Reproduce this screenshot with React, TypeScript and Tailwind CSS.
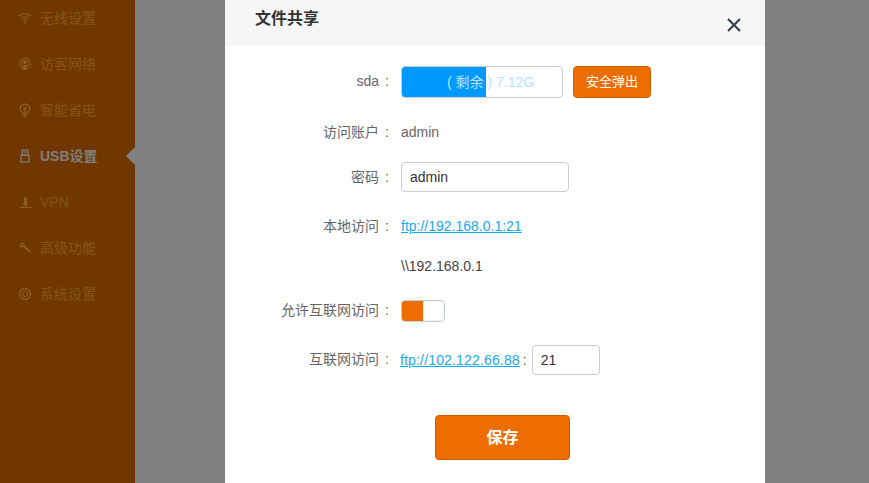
import { ReactNode } from "react";

const font = "font-['Liberation_Sans','Noto_Sans_CJK_SC',sans-serif]";

const WifiIcon = () => (
  <svg width="14" height="12" viewBox="0 0 14 12" fill="none" stroke="currentColor" strokeWidth="1.2">
    <path d="M1 4 C4.5 1 9.5 1 13 4" />
    <path d="M3 6.4 C5.5 4.4 8.5 4.4 11 6.4" />
    <path d="M5 8.6 C6.2 7.7 7.8 7.7 9 8.6" />
    <circle cx="7" cy="10.6" r="0.9" fill="currentColor" stroke="none" />
  </svg>
);

const GuestIcon = () => (
  <svg width="14" height="14" viewBox="0 0 14 14" fill="none" stroke="currentColor" strokeWidth="1">
    <circle cx="7" cy="6.5" r="5.5" />
    <circle cx="7" cy="6.5" r="3.4" />
    <circle cx="7" cy="5.6" r="1.5" fill="currentColor" stroke="none" />
    <path d="M5 13 L5.6 8 H8.4 L9 13 Z" fill="currentColor" stroke="none" />
  </svg>
);

const BulbIcon = () => (
  <svg width="12" height="15" viewBox="0 0 12 15" fill="none" stroke="currentColor" strokeWidth="1.2">
    <path d="M3.6 10 C1 8.2 1 5.8 1.5 4.2 C3 0.2 9 0.2 10.5 4.2 C11 5.8 11 8.2 8.4 10 Z" />
    <path d="M6 3.5 V9.5 M4 5.5 H8" />
    <path d="M4 11.5 H8 M4.6 13.5 H7.4" strokeWidth="1.4" />
  </svg>
);

const UsbIcon = () => (
  <svg width="10" height="14" viewBox="0 0 10 14" fill="none" stroke="currentColor" strokeWidth="1.2">
    <rect x="2.2" y="1" width="5.6" height="5" />
    <rect x="1" y="6" width="8" height="7" />
    <path d="M3.5 3 H6.5" />
  </svg>
);

const VpnIcon = () => (
  <svg width="13" height="13" viewBox="0 0 13 13" fill="currentColor">
    <circle cx="6.5" cy="3" r="2" />
    <path d="M5.2 4.5 H7.8 L8.8 9.5 H4.2 Z" />
    <rect x="0.5" y="10.8" width="12" height="1.1" />
  </svg>
);

const ToolIcon = () => (
  <svg width="13" height="12" viewBox="0 0 13 12" fill="none" stroke="currentColor" strokeWidth="1.2">
    <path d="M0.8 3.6 L3.4 0.9 L5.2 2.6 L2.6 5.2 Z" />
    <path d="M4.4 3.8 L11.8 10.6" strokeWidth="1.7" />
  </svg>
);

const GearIcon = () => (
  <svg width="14" height="14" viewBox="0 0 14 14" fill="none" stroke="currentColor">
    <circle cx="7" cy="7" r="5.4" strokeWidth="1.5" strokeDasharray="2.2 0.6" />
    <circle cx="7" cy="7" r="2.6" strokeWidth="1" />
  </svg>
);

const menu = [
  { label: "无线设置", icon: <WifiIcon /> },
  { label: "访客网络", icon: <GuestIcon /> },
  { label: "智能省电", icon: <BulbIcon /> },
  { label: "USB设置", icon: <UsbIcon />, active: true },
  { label: "VPN", icon: <VpnIcon /> },
  { label: "高级功能", icon: <ToolIcon /> },
  { label: "系统设置", icon: <GearIcon /> },
];

const Sidebar = () => (
  <aside className="w-[135px] h-full shrink-0 bg-[#703700]">
    <nav className="-mt-[5px]">
      {menu.map((item) => (
        <div
          key={item.label}
          className={`relative h-[46px] flex items-center text-sm ${item.active ? "font-bold text-[#7f7f7f]" : "text-[#85561c]"}`}
        >
          <span className={`w-[14px] ml-[18px] mr-[8px] flex justify-center ${item.active ? "text-[#7f7f7f]" : "text-[#8f5f28]"}`}>
            {item.icon}
          </span>
          {item.label}
          {item.active && (
            <span className="absolute right-0 top-[14px] border-y-[9px] border-r-[9px] border-y-transparent border-r-[#808080]" />
          )}
        </div>
      ))}
    </nav>
  </aside>
);

const Row = ({ label, height, lift = "", children }: { label?: string; height: string; lift?: string; children: ReactNode }) => (
  <div className={`flex items-center ${height}`}>
    <div className={`w-[154px] text-right text-sm text-[#666] ${lift}`}>{label}</div>
    <div className={`w-[13px] pl-[6px] text-sm text-[#666] ${lift}`}>{label ? ":" : ""}</div>
    <div className="flex items-center ml-[9px]">{children}</div>
  </div>
);

const App = () => (
  <div className={`w-[869px] h-[483px] overflow-hidden flex bg-[#808080] ${font}`}>
    <Sidebar />
    <main className="w-[540px] h-full ml-[90px] bg-white">
      <header className="h-[46px] bg-[#f6f6f6] flex justify-between pl-[30px] pr-[23px]">
        <h1 className="text-base font-bold text-[#333] pt-[7px] leading-6">文件共享</h1>
        <svg className="mt-[17px]" width="16" height="16" viewBox="0 0 16 16" stroke="#3a4450" strokeWidth="2.2">
          <path d="M2 2 L14 14 M14 2 L2 14" />
        </svg>
      </header>

      <div className="pt-[20px]">
        <Row label="sda" height="h-[32px]" lift="pb-[3px]">
          <div className="relative w-[162px] h-[32px] rounded border border-[#ccc] overflow-hidden text-sm leading-[30px] text-[#b3e3ff]">
            <div className="absolute inset-y-0 left-0 w-[84px] bg-[#0099ff]" />
            <span className="absolute left-[45px] top-0 whitespace-pre">( 剩余 ) 7.12G</span>
          </div>
          <button className="ml-[10px] w-[78px] h-[32px] rounded bg-[#ed6d00] border border-[#cf6000] text-white text-[13px]">
            安全弹出
          </button>
        </Row>
        <div className="h-[19px]" />
        <Row label="访问账户" height="h-[30px]">
          <span className="text-sm text-[#666]">admin</span>
        </Row>
        <div className="h-[15px]" />
        <Row label="密码" height="h-[30px]">
          <input
            readOnly
            value="admin"
            className="w-[168px] h-[30px] rounded border border-[#ccc] px-[8px] text-sm text-[#333] outline-none"
          />
        </Row>
        <div className="h-[19px]" />
        <Row label="本地访问" height="h-[30px]">
          <a className="text-sm text-[#1aa7f0] underline">ftp://192.168.0.1:21</a>
        </Row>
        <div className="h-[10px]" />
        <Row height="h-[30px]">
          <span className="text-sm text-[#444]">\\192.168.0.1</span>
        </Row>
        <div className="h-[15px]" />
        <Row label="允许互联网访问" height="h-[30px]" lift="pb-[2px]">
          <div className="w-[44px] h-[22px] rounded border border-[#c5ccd3] flex overflow-hidden">
            <div className="w-[21px] bg-[#ed6d00]" />
            <div className="flex-1 bg-white shadow-[inset_0_0_2px_#c5ccd3]" />
          </div>
        </Row>
        <div className="h-[19px]" />
        <Row label="互联网访问" height="h-[30px]" lift="pb-[2px]">
          <a className="-ml-[1px] text-sm tracking-[0.16px] text-[#1aa7f0] underline">ftp://102.122.66.88</a>
          <span className="ml-[3px] w-[9px] text-sm text-[#666]">:</span>
          <input
            readOnly
            value="21"
            className="w-[68px] h-[30px] rounded border border-[#ccc] px-[8px] text-sm text-[#333] outline-none"
          />
        </Row>
        <div className="flex justify-center pt-[40px] pl-[15px]">
          <button className="w-[135px] h-[45px] rounded bg-[#ed6d00] border border-[#c95d00] text-white text-base font-bold">
            保存
          </button>
        </div>
      </div>
    </main>
  </div>
);

export default App;
